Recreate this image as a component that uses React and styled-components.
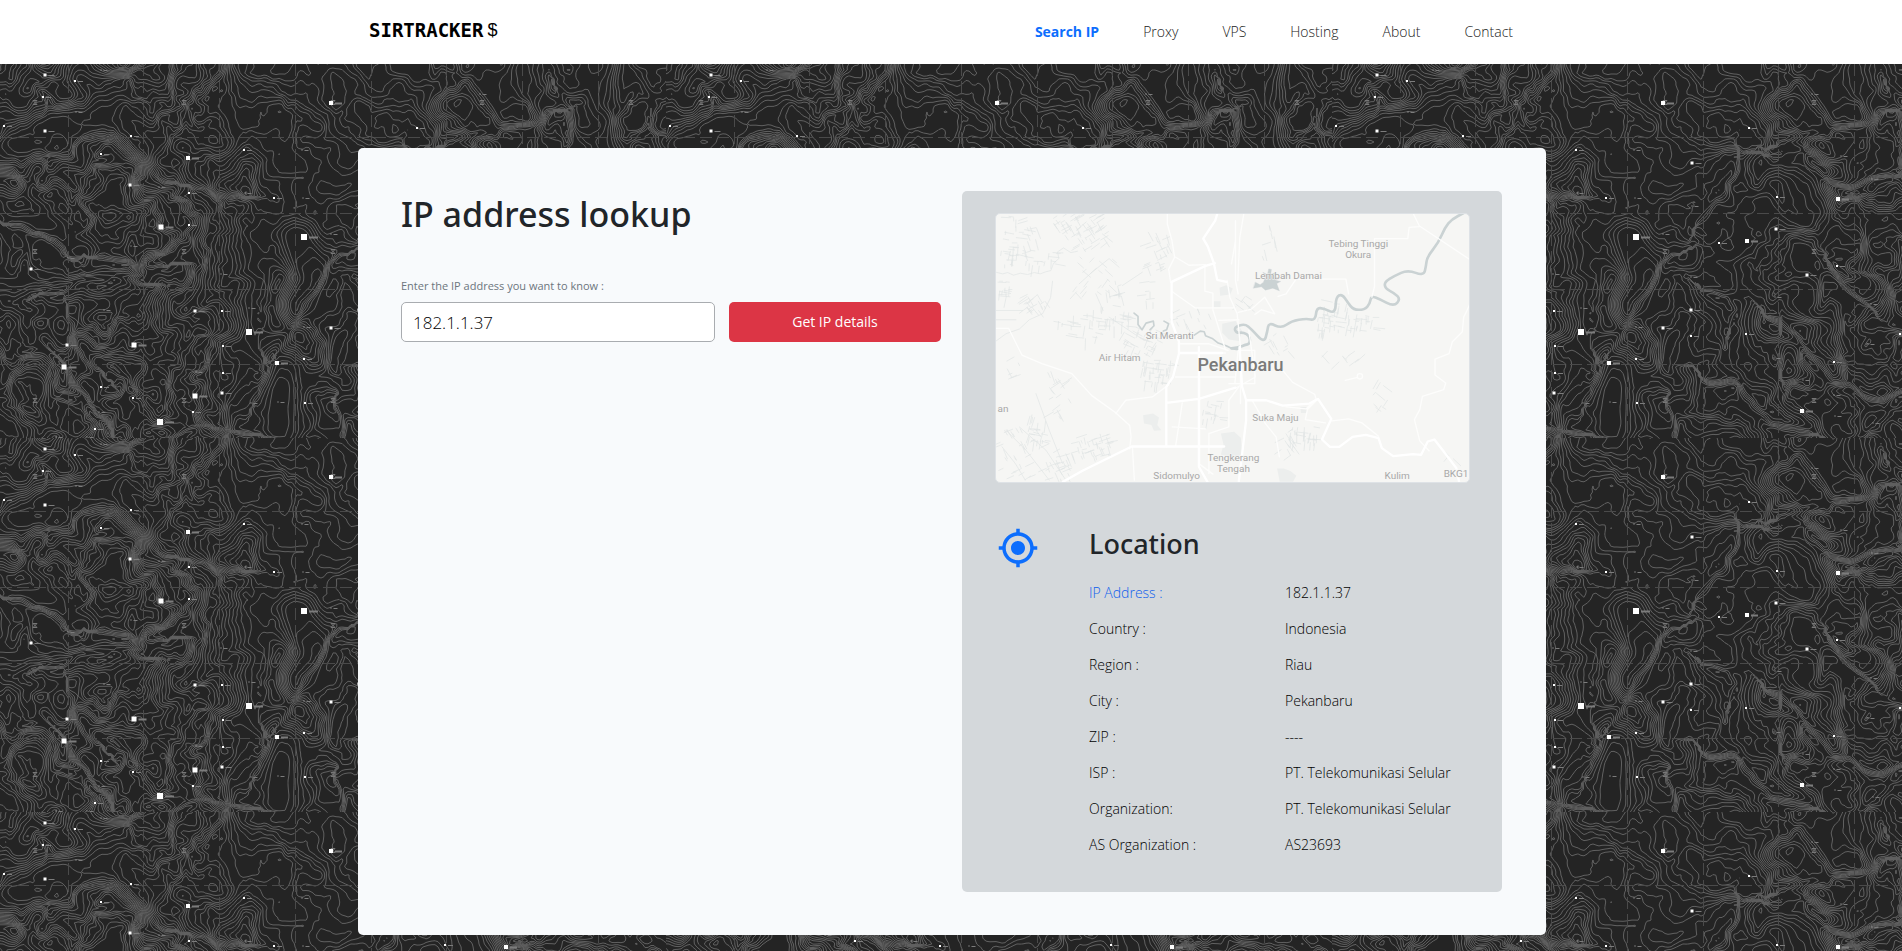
import React, { useMemo } from "react";
import styled, { createGlobalStyle } from "styled-components";
import { MdMyLocation } from "react-icons/md";

const GlobalStyle = createGlobalStyle`
  *, *::before, *::after { box-sizing: border-box; }
  body {
    margin: 0;
    background: #242424;
    color: #212529;
    font-family: "Open Sans", "Noto Sans", sans-serif;
    font-size: 14px;
    line-height: 20px;
  }
`;

/* ---------- Topographic backdrop ---------- */

const TILE_W = 666;
const TILE_H = 374;

function hash(x, y, seed) {
  let h = (x * 374761393 + y * 668265263 + seed * 974634777) | 0;
  h = Math.imul(h ^ (h >>> 13), 1274126177);
  h ^= h >>> 16;
  return (h >>> 0) / 4294967295;
}

function noise(x, y, seed) {
  const xi = Math.floor(x);
  const yi = Math.floor(y);
  const xf = x - xi;
  const yf = y - yi;
  const u = xf * xf * (3 - 2 * xf);
  const v = yf * yf * (3 - 2 * yf);
  const a = hash(xi, yi, seed);
  const b = hash(xi + 1, yi, seed);
  const c = hash(xi, yi + 1, seed);
  const d = hash(xi + 1, yi + 1, seed);
  return a + (b - a) * u + (c - a) * v + (a - b - c + d) * u * v;
}

/* Distance to a polyline; the sign tells the side of the line. */
function lineDistance(points, x, y) {
  let best = Infinity;
  let side = 1;
  for (let i = 0; i + 3 < points.length; i += 2) {
    const ax = points[i];
    const ay = points[i + 1];
    const dx = points[i + 2] - ax;
    const dy = points[i + 3] - ay;
    const t = Math.max(0, Math.min(1, ((x - ax) * dx + (y - ay) * dy) / (dx * dx + dy * dy)));
    const ex = x - ax - t * dx;
    const ey = y - ay - t * dy;
    const d = Math.hypot(ex, ey);
    if (d < best) {
      best = d;
      side = dx * ey - dy * ex > 0 ? 1 : -1;
    }
  }
  return [best, side];
}

const CLIFFS = [
  [[96, 194, 125, 192, 150, 202, 168, 203], 4, 4],
  [[48, 232, 80, 222, 118, 216, 145, 220], 4, 4],
  [[12, 165, 42, 172, 62, 190], 3, 3],
  [[66, 305, 84, 330, 96, 345, 108, 362], 4, 5],
  [[70, 255, 80, 285, 100, 310], 3, 3],
  [[190, 122, 215, 130, 236, 132], 5, 4],
  [[165, 372, 185, 366, 205, 364, 250, 372], 3, 3],
  [[275, 290, 300, 260, 315, 225, 330, 200, 345, 193], 3, 3],
  [[264, 300, 266, 318, 258, 335], 3, 2],
  [[338, 345, 340, 372], 3, 3],
  [[404, 100, 402, 115, 380, 145, 370, 160], 4, 3],
  [[375, 226, 392, 235, 400, 248, 398, 265], 4, 3],
  [[378, 312, 400, 320, 425, 342, 450, 362, 478, 370], 5, 5],
  [[440, 253, 462, 270, 480, 290, 496, 312, 530, 332, 548, 334, 570, 325], 5, 6],
  [[448, 78, 470, 72, 496, 72, 515, 60, 550, 50], 4, 4],
  [[440, 88, 470, 88, 495, 112, 520, 120, 570, 112], 4, 4],
  [[450, 275, 450, 305], 4, 3],
  [[500, 205, 512, 226, 535, 242], 3, 3],
  [[560, 30, 572, 60, 566, 90], 4, 3],
];

const VALLEYS = [
  [[78, 0, 102, 22, 112, 46, 145, 80, 195, 112], 5],
  [[112, 48, 80, 56, 40, 66, 0, 90], 4],
  [[0, 222, 36, 240, 90, 230, 150, 226], 4],
  [[0, 140, 45, 162, 80, 186], 3],
  [[298, 175, 312, 215, 300, 240], 7],
  [[282, 370, 285, 300], 3],
  [[460, 110, 475, 140], 12],
  [[480, 0, 505, 35], 7],
  [[597, 0, 592, 40, 605, 90], 6],
];

function smooth(a, b, x) {
  const t = Math.max(0, Math.min(1, (x - a) / (b - a)));
  return t * t * (3 - 2 * t);
}

function heightAt(x, y) {
  const wx = x + 24 * (noise(x / 20, y / 20, 5) - 0.5) + 6 * (noise(x / 7, y / 7, 15) - 0.5);
  const wy = y + 24 * (noise(x / 20, y / 20, 6) - 0.5) + 6 * (noise(x / 7, y / 7, 16) - 0.5);
  const detail = 1.9 - 1.1 * smooth(200, 260, x) + 0.7 * smooth(390, 470, x);
  const trend = -26 * smooth(105, 262, wx) + 14 * smooth(400, 640, wx) - 8 * Math.sin(wy / 42) * (1 - smooth(150, 240, x));
  const mean = trend + 6 + 2.2 * detail;
  let h =
    trend +
    12 * noise(wx / 58, wy / 58, 1) +
    5 * detail * noise(wx / 26, wy / 26, 2) +
    2 * detail * noise(wx / 12, wy / 12, 3);
  for (const [line, width] of VALLEYS) {
    const [d] = lineDistance(line, x, y);
    if (d < 36) {
      const k = 0.9 * (1 - smooth(width, width + 24, d));
      h = h * (1 - k) + (mean - 3) * k;
    }
  }
  for (const [line, width, gain] of CLIFFS) {
    const [d, side] = lineDistance(line, wx * 0.4 + x * 0.6, wy * 0.4 + y * 0.6);
    if (d < 50) h += gain * side * Math.tanh(d / width) * Math.exp(-(d * d) / 450);
  }
  return h;
}

function contourPath() {
  const step = 3;
  const cols = Math.ceil(TILE_W / step) + 1;
  const rows = Math.ceil(TILE_H / step) + 1;
  const grid = new Float64Array(cols * rows);
  for (let j = 0; j < rows; j++)
    for (let i = 0; i < cols; i++) grid[j * cols + i] = heightAt(i * step, j * step);

  const out = [];
  for (let j = 0; j < rows - 1; j++) {
    for (let i = 0; i < cols - 1; i++) {
      const x = i * step;
      const y = j * step;
      const corners = [
        [x, y, grid[j * cols + i]],
        [x + step, y, grid[j * cols + i + 1]],
        [x + step, y + step, grid[(j + 1) * cols + i + 1]],
        [x, y + step, grid[(j + 1) * cols + i]],
      ];
      const values = corners.map((c) => c[2]);
      const low = Math.ceil(Math.min(...values));
      const high = Math.floor(Math.max(...values));
      for (let level = low; level <= high; level++) {
        const hits = [];
        for (let k = 0; k < 4; k++) {
          const a = corners[k];
          const b = corners[(k + 1) % 4];
          if (a[2] < level !== b[2] < level) {
            const t = (level - a[2]) / (b[2] - a[2]);
            hits.push((a[0] + (b[0] - a[0]) * t).toFixed(1) + " " + (a[1] + (b[1] - a[1]) * t).toFixed(1));
          }
        }
        for (let k = 0; k + 1 < hits.length; k += 2) out.push("M" + hits[k] + "L" + hits[k + 1]);
      }
    }
  }
  return out.join("");
}

/* Survey marks: x, y, size */
const MARKS = [
  [45, 11, 3], [75, 17, 2], [43, 33, 2], [4, 62, 2], [45, 67, 3], [76, 48, 1], [101, 6, 1],
  [131, 72, 2], [188, 94, 4], [244, 86, 2], [331, 39, 4], [302, 86, 1], [101, 90, 2], [130, 121, 3],
  [159, 123, 1], [189, 129, 2], [245, 129, 1], [274, 134, 2], [303, 134, 1], [161, 163, 5],
  [189, 161, 2], [304, 173, 6], [331, 170, 1], [31, 205, 3], [68, 194, 1], [221, 210, 1],
  [131, 182, 1], [195, 247, 3], [222, 247, 2], [249, 244, 1], [104, 246, 1], [249, 268, 6],
  [331, 264, 3], [304, 263, 1], [67, 281, 3], [134, 281, 5], [223, 282, 2], [64, 303, 5],
  [277, 299, 4], [304, 295, 2], [196, 308, 1], [223, 309, 2], [101, 323, 2], [195, 332, 5],
  [222, 329, 3], [133, 334, 2], [251, 339, 1], [278, 338, 1], [305, 339, 2], [193, 348, 2],
  [160, 358, 6], [99, 348, 1], [95, 365, 2], [56, 373, 1], [87, 373, 1], [360, 99, 3],
  [417, 64, 2], [480, 30, 1], [509, 92, 1], [506, 135, 4], [540, 115, 1], [445, 133, 2],
  [360, 142, 1], [444, 165, 3], [387, 179, 2], [415, 177, 4], [505, 202, 2], [475, 211, 3],
  [359, 213, 1], [443, 233, 1], [539, 240, 1], [359, 246, 3], [359, 272, 2], [414, 270, 2],
  [536, 280, 1], [568, 270, 2], [502, 298, 2], [442, 294, 1], [471, 316, 1], [470, 347, 4],
  [503, 352, 1], [502, 331, 1], [541, 359, 1],
];

const STATIONS = [35, 184, 333, 482, 631].flatMap((x) => [38, 187, 336].map((y) => [x, y]));

const BackdropSvg = styled.svg`
  position: absolute;
  inset: 0;
  z-index: -1;
  width: 100%;
  height: 100%;
`;

function Backdrop() {
  const path = useMemo(contourPath, []);
  return (
    <BackdropSvg aria-hidden="true">
      <defs>
        <pattern id="topo" width={TILE_W} height={TILE_H} patternUnits="userSpaceOnUse">
          <rect width={TILE_W} height={TILE_H} fill="#242424" />
          <path d={path} fill="none" stroke="#606060" strokeWidth="1" />
          <g stroke="#4a4a4a" strokeDasharray="12 5">
            {[68, 143, 219, 295, 371, 446, 522, 598].map((x) => (
              <path key={x} d={`M${x}.5 0V${TILE_H}`} />
            ))}
            {[73, 149, 225, 300].map((y) => (
              <path key={y} d={`M0 ${y}.5H${TILE_W}`} />
            ))}
          </g>
          {STATIONS.map(([x, y]) => (
            <path key={`${x}-${y}`} d={`M${x - 2} ${y - 1.5}h4l-4 4h4z`} stroke="#777" fill="none" />
          ))}
          {MARKS.map(([x, y, s]) => (
            <g key={`${x}-${y}`}>
              <rect x={x - s / 2} y={y - s / 2} width={s} height={s} fill={s > 1 ? "#fff" : "#bbb"} />
              <path d={`M${x + s / 2 + 2} ${y + 0.5}h${3 + s}`} stroke="#7c7c7c" strokeWidth={s > 3 ? 2 : 1} />
            </g>
          ))}
        </pattern>
      </defs>
      <rect width="100%" height="100%" fill="url(#topo)" />
    </BackdropSvg>
  );
}

/* ---------- Map ---------- */

/* Clusters of minor streets: x, y, width, height, count, angle */
const STREETS = [
  [10, 5, 80, 120, 24, 0], [10, 100, 180, 60, 26, 0], [80, 10, 50, 130, 12, 65], [170, 5, 150, 50, 40, -40],
  [200, 50, 130, 60, 22, -40], [240, 120, 120, 120, 22, 35], [330, 200, 50, 50, 14, -20],
  [90, 230, 60, 70, 24, 50], [5, 200, 40, 50, 14, 0], [170, 300, 140, 80, 26, 0], [280, 270, 120, 70, 24, 0],
  [380, 340, 110, 80, 34, 20], [440, 440, 90, 70, 40, 0], [455, 50, 70, 120, 26, 60],
  [520, 280, 120, 60, 14, 60], [160, 490, 70, 120, 18, 50], [10, 640, 110, 150, 30, 55],
  [100, 600, 50, 90, 24, 5], [150, 690, 80, 110, 28, 60], [220, 660, 130, 70, 40, -25],
  [420, 200, 60, 80, 8, 80], [620, 560, 60, 60, 18, 0], [30, 430, 150, 60, 8, 60],
  [960, 280, 50, 80, 24, 0], [1010, 260, 60, 100, 18, 90], [1060, 300, 80, 50, 22, 0],
  [820, 360, 60, 60, 10, 50], [975, 400, 170, 50, 10, 40], [880, 640, 90, 50, 24, 0],
  [840, 640, 60, 90, 14, 50], [1130, 500, 50, 110, 10, -60], [715, 240, 60, 40, 10, 30],
  [790, 30, 50, 110, 8, 70], [1340, 680, 60, 60, 3, 40],
];

function streetPath([x, y, w, h, count, angle], index) {
  let d = "";
  for (let i = 0; i < count; i++) {
    const r = (n) => hash(i * 7 + n, index * 13, 9);
    const turn = ((angle + (r(3) > 0.5 ? 90 : 0) + r(4) * 14) * Math.PI) / 180;
    const length = 8 + r(5) * 26;
    const px = x + r(1) * w;
    const py = y + r(2) * h;
    d += `M${px.toFixed(0)} ${py.toFixed(0)}l${(Math.cos(turn) * length).toFixed(0)} ${(Math.sin(turn) * length).toFixed(0)}`;
  }
  return d;
}

/* Rounds a polyline by running quadratic curves through its midpoints. */
function curve(points) {
  const n = points.length;
  let d = `M${points[0]} ${points[1]}`;
  for (let i = 2; i + 3 < n; i += 2) {
    d += `Q${points[i]} ${points[i + 1]} ${(points[i] + points[i + 2]) / 2} ${(points[i + 1] + points[i + 3]) / 2}`;
  }
  return d + `L${points[n - 2]} ${points[n - 1]}`;
}

const RIVER = [
  0, 404, 18, 402, 40, 394, 56, 390, 54, 366, 36, 356, 14, 358, 8, 340, 40, 330, 60, 346, 98, 388, 108, 352,
  112, 326, 150, 344, 180, 322, 225, 314, 252, 320, 256, 282, 278, 284, 312, 300, 314, 250, 332, 240,
  350, 266, 366, 288, 400, 288, 416, 270, 420, 246, 446, 256, 488, 278, 508, 256, 490, 238, 462, 224,
  460, 204, 490, 186, 530, 168, 578, 186, 585, 155, 588, 130, 622, 86, 642, 40, 662, 16, 700, -4,
];

const Place = styled.text`
  font-family: Roboto, sans-serif;
  font-size: ${(p) => (p.$major ? 18 : 10)}px;
  font-weight: ${(p) => (p.$major ? 500 : 400)};
  fill: ${(p) => (p.$major ? "#7a7a7a" : "#a8a8a8")};
  text-anchor: middle;
  paint-order: stroke;
  stroke: #f6f6f4;
  stroke-width: ${(p) => (p.$major ? 0 : 1)}px;
`;

const PLACES = [
  ["Tebing Tinggi", 363, 33], ["Okura", 363, 44], ["Lembah Damai", 293, 65], ["Sri Meranti", 174, 125],
  ["Air Hitam", 124, 147], ["Suka Maju", 280, 207], ["Tengkerang", 238, 248], ["Tengah", 238, 259],
  ["Sidomulyo", 181, 266], ["Kulim", 402, 266], ["BKG1", 461, 264], ["an", 7, 198],
];

const MapFrame = styled.figure`
  margin: 0;
  overflow: hidden;
  border: 1px solid #dee2e6;
  border-radius: 5px;
  background: #f6f6f4;
  line-height: 0;
  svg { display: block; width: 100%; height: auto; }
`;

function CityMap() {
  return (
    <MapFrame>
      <svg viewBox="0 0 474 269" role="img" aria-label="Map of Pekanbaru">
        <g transform="scale(.33333)" fill="none" strokeLinejoin="round" strokeLinecap="round">
          <g fill="#eceeed">
            <path d="M672 222l20-8 20 10-8 18-30 4z M655 262h20v18h-20z M680 330l40-8 20 30-10 30-30-5-20-20z M442 605l30-5 18 12-5 22 12 16-22 2-8-18-22-4z M676 660l40-5 20 18 4 50-30 10-34-10 8-30z M845 765l20 0 20 8 18 14-10 18h-40z" />
            <path d="M915 580h20v18h-18z" />
          </g>
          <g stroke="#dfe4e4" strokeWidth="2">
            {STREETS.map((s, i) => (
              <path key={i} d={streetPath(s, i)} />
            ))}
            <path d="M0 175l20 5 15-4 18 8 20-6 22 4 20-6 18 4 16-6 16-4 8-22 16-14 -4-20 18-12 22 14 20-4M0 382l30-22 40-14 30-28 40-18 24-48 6-50 M0 290h80 M0 318h60 M320 60l30 24 M250 210l40-36 50-40 30 26 M300 240l22 50 M340 310l90 60 40 16 M30 650l60 60 70 90 M70 640l80 70 60 90 M18 700l40 50 30 50 M120 540l40 110 40 100 M440 175l-60 40" />
          </g>
          <g stroke="#cad2d3">
            <path d="M415 298l12 10 0 24 12 16 12-20 22-6 2 14-12 12 4-4M505 322l14 8-6 18-10 4M596 364l18-12 12 2 4 12 20 8 18 14 24 8 20 10 16 2" strokeWidth="5" />
            <path d={curve(RIVER)} transform="translate(708)" strokeWidth="8" />
            <path d="M780 205l14 8 10-8 6-16-8-14 14 6 4-16 8 2-2 14 14-4-4 10 16 6-12 6 16 4-12 6 8 22-20-8-22 6-12-10-24 4z" fill="#cad2d3" strokeWidth="1" />
          </g>
          <g stroke="#fdfdfc" strokeWidth="4">
            <path d="M0 344h38l40 80 60 26 90 30 60 66 70 50 44 40 4 34-4 36M360 600l30-40 80-10 48-36M410 700l6 100M515 0v30l14 50 8 50-18 36 6 40M540 130l40 24 50-2M628 152v80l24 6 0 50 38 120M528 232l70 50 120 0M540 490h180M550 418h140M548 390h90l60 20M560 568l-20 130M640 660l60-20 0-80 30-40M612 492v260l40 30M670 320l60-2M640 780v-120M530 640l100 6M720 20v180l8 40M745 0l-12 70-6 130M695 200l8 50 22 50 10 100 0 170" />
            <path d="M1255 0l18 36 60 40 90 60 10 8M1130 250l8-32 0-144 100 0 4-34 30-2M1060 240l-8-44h-150l-30 44-24 8M1438 240l-22 50-10 20-4 44-30 30-10 36-42 16 0 48 32 24-6 20-64 20-8 40-16 30 16 64 28 30M862 470l30 36 66 36 4 14-30 30-60-6M966 558l-30 30-6 30 60 10M1010 622l50-6 40 12 50 40M770 560l40 70 32 40 10 60M720 80l-12 70" />
            <path d="M1050 500l34-8 M728 296l40-10 40-36 30 50-40-12-20 14M760 350l20 140-60 34M700 510l66 0 M728 410h50v100h-60z" />
            <circle cx="1094" cy="488" r="8" />
          </g>
          <g stroke="#fff" strokeWidth="7">
            <path d="M665 0l-6 20-36 54 14 24 18 50 10 50 28 6M658 148l-28 8-102 48 0 120 22 60 0 36-18 70-20 30 0 180M512 568l98-12 110-34 M200 806l60-34 148-73h278M610 400v360l26 46M550 418h130M732 400l8 120 12 40 0 60-10 84-12 100M752 560l60 0 50 16 80-6 26-14 40 60-28 62 24 22 28 0 40-30 40-6 38 10 10 30 34 24 60-6 24 2 20-40 20-6 28 36 38 50 8 40" />
          </g>
        </g>
        {PLACES.map(([name, x, y]) => (
          <Place key={name} x={x} y={y}>{name}</Place>
        ))}
        <Place $major x={245} y={157}>Pekanbaru</Place>
      </svg>
    </MapFrame>
  );
}

/* ---------- Header ---------- */

const Container = styled.div`
  width: 100%;
  max-width: 1188px;
  margin: 0 auto;
  position: relative;
`;

const Header = styled.header`
  background: #fff;
`;

const HeaderRow = styled(Container)`
  display: flex;
  align-items: center;
  justify-content: space-between;
  height: 64px;
  padding: 0 32px 0 12px;
`;

const Logo = styled.a`
  display: flex;
  align-items: center;
  gap: 4px;
  padding-bottom: 4px;
  color: #000;
  text-decoration: none;
  font-family: "DejaVu Sans Mono", monospace;
  font-size: 19px;
  font-weight: 700;
`;

const LogoSign = styled.span`
  font-family: "Liberation Sans", sans-serif;
  font-size: 18px;
  font-weight: 400;
`;

const Nav = styled.nav`
  display: flex;
  gap: 44px;
`;

const NavLink = styled.a`
  color: ${(p) => (p.$active ? "#0d6efd" : "#222")};
  font-weight: ${(p) => (p.$active ? 700 : 300)};
  text-decoration: none;
`;

/* ---------- Page ---------- */

const Main = styled.main`
  position: relative;
  isolation: isolate;
  min-height: calc(100vh - 64px);
  padding: 84px 0 16px 2px;
`;

const Card = styled(Container)`
  display: grid;
  grid-template-columns: 1fr 1fr;
  gap: 21px;
  padding: 43px 44px 43px 43px;
  border-radius: 5px;
  background: #f8fafc;
`;

const Title = styled.h1`
  margin: 0 0 40px;
  font-family: "Noto Sans", "Open Sans", sans-serif;
  font-size: 34px;
  line-height: 46px;
  font-weight: 500;
`;

const LookupForm = styled.form`
  display: grid;
  grid-template-columns: 314fr 212fr;
  column-gap: 14px;
  row-gap: 7px;
`;

const FieldLabel = styled.label`
  grid-column: 1 / -1;
  color: #6c757d;
  font-size: 11px;
  line-height: 18px;
`;

const TextInput = styled.input`
  min-width: 0;
  height: 40px;
  padding: 0 11px;
  border: 1px solid #a9acb0;
  border-radius: 5px;
  background: #fff;
  color: #000;
  font: inherit;
  font-size: 17px;
  font-weight: 300;
`;

const SubmitButton = styled.button`
  height: 40px;
  border: 0;
  border-radius: 5px;
  background: #dc3545;
  color: #fff;
  font: inherit;
`;

const Panel = styled.section`
  padding: 22px 32px 29px 33px;
  border-radius: 5px;
  background: #d4d8db;
`;

const Location = styled.div`
  display: grid;
  grid-template-columns: 92px 1fr;
  margin-top: 44px;
  padding-left: 2px;
  color: #0d6efd;
`;

const LocationTitle = styled.h2`
  margin: 0 0 14px;
  color: #212529;
  font-family: "Noto Sans", "Open Sans", sans-serif;
  font-size: 27px;
  line-height: 34px;
  font-weight: 500;
`;

const Details = styled.table`
  width: 100%;
  border-collapse: collapse;
  table-layout: fixed;
  color: #000;
  font-weight: 300;
`;

const Term = styled.th`
  width: 196px;
  height: 36px;
  padding: 0;
  color: ${(p) => (p.$accent ? "#0d5eed" : "inherit")};
  font-weight: 300;
  text-align: left;
  white-space: nowrap;
`;

const Value = styled.td`
  height: 36px;
  padding: 0;
  white-space: nowrap;
`;

const LINKS = ["Search IP", "Proxy", "VPS", "Hosting", "About", "Contact"];

const DETAILS = [
  ["IP Address :", "182.1.1.37"],
  ["Country :", "Indonesia"],
  ["Region :", "Riau"],
  ["City :", "Pekanbaru"],
  ["ZIP :", "----"],
  ["ISP :", "PT. Telekomunikasi Selular"],
  ["Organization:", "PT. Telekomunikasi Selular"],
  ["AS Organization :", "AS23693"],
];

export default function App() {
  return (
    <>
      <GlobalStyle />
      <Header>
        <HeaderRow>
          <Logo href="#">
            SIRTRACKER<LogoSign>$</LogoSign>
          </Logo>
          <Nav>
            {LINKS.map((name, i) => (
              <NavLink key={name} href="#" $active={i === 0}>{name}</NavLink>
            ))}
          </Nav>
        </HeaderRow>
      </Header>
      <Main>
        <Backdrop />
        <Card>
          <div>
            <Title>IP address lookup</Title>
            <LookupForm onSubmit={(e) => e.preventDefault()}>
              <FieldLabel htmlFor="ip">Enter the IP address you want to know :</FieldLabel>
              <TextInput id="ip" type="text" defaultValue="182.1.1.37" />
              <SubmitButton type="submit">Get IP details</SubmitButton>
            </LookupForm>
          </div>
          <Panel>
            <CityMap />
            <Location>
              <MdMyLocation size={42} aria-hidden="true" />
              <div>
                <LocationTitle>Location</LocationTitle>
                <Details>
                  <tbody>
                    {DETAILS.map(([term, value], i) => (
                      <tr key={term}>
                        <Term scope="row" $accent={i === 0}>{term}</Term>
                        <Value>{value}</Value>
                      </tr>
                    ))}
                  </tbody>
                </Details>
              </div>
            </Location>
          </Panel>
        </Card>
      </Main>
    </>
  );
}
